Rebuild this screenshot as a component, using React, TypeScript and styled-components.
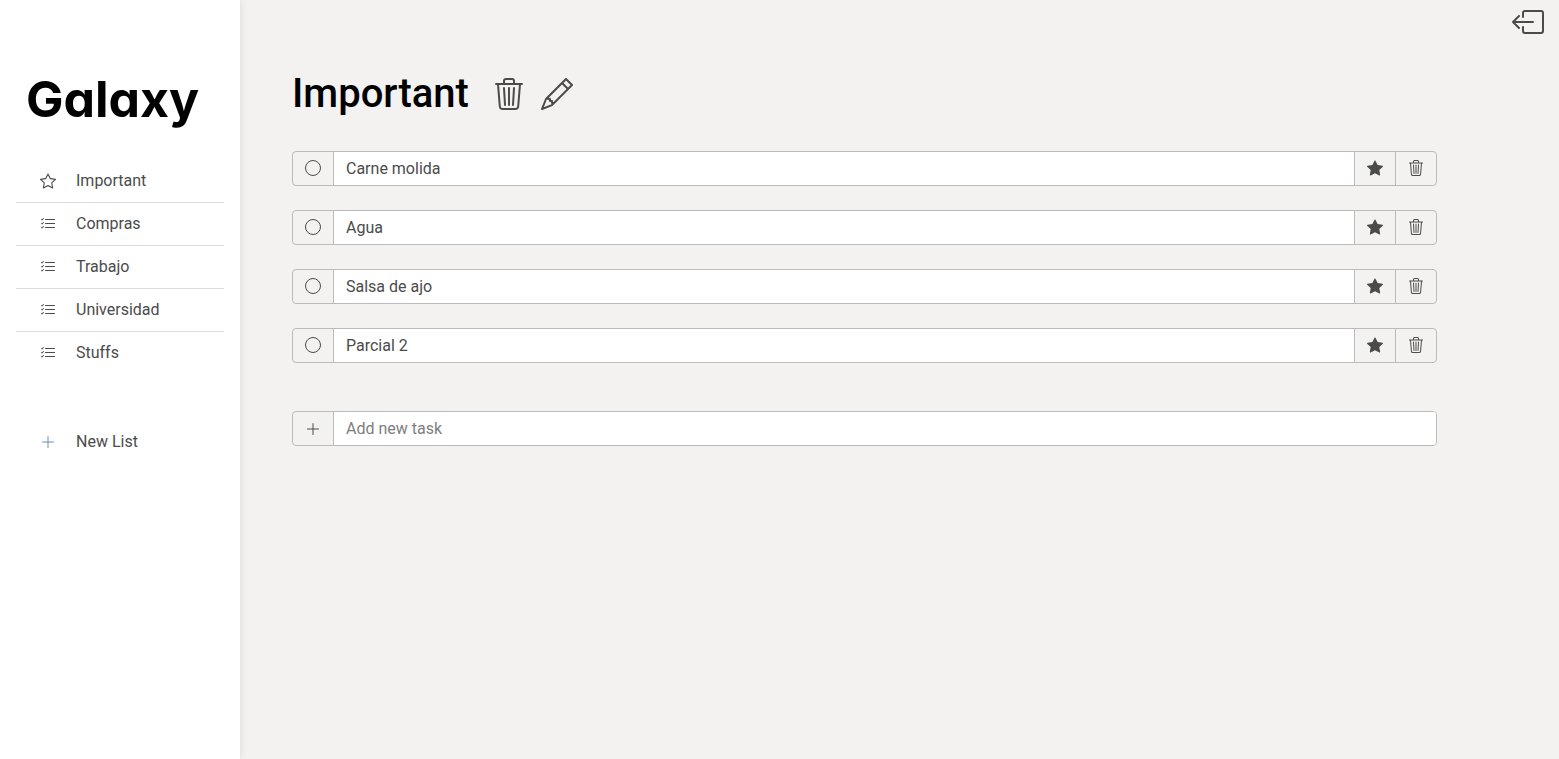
import React, { useState } from "react";
import styled, { createGlobalStyle } from "styled-components";
import {
  BsBoxArrowLeft,
  BsListCheck,
  BsPencil,
  BsPlusLg,
  BsStar,
  BsStarFill,
  BsTrash3,
} from "react-icons/bs";

const ink = "#4b4b4b";
const line = "#bbbbbb";
const surface = "#f3f2f1";

const GlobalStyle = createGlobalStyle`
  *, *::before, *::after { box-sizing: border-box; }
  body {
    margin: 0;
    background: ${surface};
    color: ${ink};
    font-family: Roboto, "Liberation Sans", sans-serif;
    font-size: 16px;
    line-height: 24px;
  }
  svg { display: block; }
`;

const Page = styled.div`
  display: flex;
  min-height: 100vh;
`;

const Sidebar = styled.aside`
  flex: none;
  width: 240px;
  padding: 64px 16px 32px;
  background: #fff;
  box-shadow: 0 0 8px rgba(0, 0, 0, 0.1);
`;

const Logo = styled.a`
  display: block;
  margin-bottom: 26px;
  padding-left: 10px;
  color: #000;
  font-family: Inter, Lato, sans-serif;
  font-size: 50px;
  font-weight: 700;
  font-feature-settings: "cv11";
  line-height: 70px;
  text-decoration: none;
`;

const Lists = styled.ul`
  margin: 0 0 48px;
  padding: 0;
  list-style: none;
`;

const ListItem = styled.li`
  & + & {
    border-top: 1px solid #dddddd;
  }
`;

const NavLink = styled.a`
  display: flex;
  align-items: center;
  gap: 20px;
  height: 42px;
  padding: 0 24px;
  color: ${ink};
  text-decoration: none;
`;

const NewListButton = styled.button`
  display: flex;
  align-items: center;
  gap: 20px;
  width: 100%;
  height: 40px;
  padding: 0 24px;
  border: 0;
  background: none;
  color: ${ink};
  font: inherit;
  cursor: pointer;

  svg {
    color: #6f8fa8;
  }
`;

const Main = styled.main`
  position: relative;
  flex: 1;
  min-width: 0;
  padding: 64px 122px 64px 52px;
`;

const IconButton = styled.button`
  padding: 0;
  border: 0;
  background: none;
  color: ${ink};
  cursor: pointer;
`;

const SignOut = styled(IconButton)`
  position: absolute;
  top: 6px;
  right: 15px;
`;

const Header = styled.header`
  display: flex;
  align-items: center;
  gap: 16px;
  margin-bottom: 27px;
`;

const Title = styled.h1`
  margin: 0 8px 0 0;
  color: #000;
  font-size: 40px;
  font-weight: 500;
  line-height: 60px;
`;

const Tasks = styled.ul`
  display: grid;
  gap: 24px;
  margin: 0 0 48px;
  padding: 0;
  list-style: none;
`;

const Row = styled.div`
  display: flex;
  height: 35px;
  overflow: hidden;
  border: 1px solid ${line};
  border-radius: 4px;
`;

const Field = styled.input`
  flex: 1;
  min-width: 0;
  padding: 0 12px;
  border: 0;
  border-left: 1px solid ${line};
  background: #fff;
  color: ${ink};
  font: inherit;
  outline: none;

  &::placeholder {
    color: #7e7e7e;
    opacity: 1;
  }
`;

const CheckCell = styled.label`
  display: flex;
  align-items: center;
  justify-content: center;
  width: 40px;
  padding-bottom: 1px;
`;

const Check = styled.input`
  appearance: none;
  width: 16px;
  height: 16px;
  margin: 0;
  border: 1px solid ${ink};
  border-radius: 50%;

  &:checked {
    background: ${ink};
  }
`;

const CellButton = styled(IconButton)<{ $divided?: boolean }>`
  display: flex;
  align-items: center;
  justify-content: center;
  width: ${(p) => (p.$divided ? 41 : 40)}px;
  padding-bottom: ${(p) => (p.$divided ? 1 : 0)}px;
  border-left: ${(p) => (p.$divided ? `1px solid ${line}` : "0")};
`;

const lists = ["Important", "Compras", "Trabajo", "Universidad", "Stuffs"];
const tasks = ["Carne molida", "Agua", "Salsa de ajo", "Parcial 2"];

function TaskRow({ name }: { name: string }) {
  const [text, setText] = useState(name);
  return (
    <Row>
      <CheckCell>
        <Check type="checkbox" aria-label={`Complete ${name}`} />
      </CheckCell>
      <Field
        type="text"
        aria-label={`Task ${name}`}
        value={text}
        onChange={(e) => setText(e.target.value)}
      />
      <CellButton $divided type="button" aria-label={`Unmark ${name}`}>
        <BsStarFill size={16} />
      </CellButton>
      <CellButton $divided type="button" aria-label={`Delete ${name}`}>
        <BsTrash3 size={16} />
      </CellButton>
    </Row>
  );
}

export default function App() {
  return (
    <>
      <GlobalStyle />
      <Page>
        <Sidebar>
          <Logo href="#home">Galaxy</Logo>
          <nav>
            <Lists>
              {lists.map((name, i) => (
                <ListItem key={name}>
                  <NavLink href={`#${name}`}>
                    {i === 0 ? <BsStar size={16} /> : <BsListCheck size={16} />}
                    {name}
                  </NavLink>
                </ListItem>
              ))}
            </Lists>
          </nav>
          <NewListButton type="button">
            <BsPlusLg size={16} />
            New List
          </NewListButton>
        </Sidebar>
        <Main>
          <SignOut type="button" aria-label="Sign out">
            <BsBoxArrowLeft size={32} />
          </SignOut>
          <Header>
            <Title>Important</Title>
            <IconButton type="button" aria-label="Delete list">
              <BsTrash3 size={32} />
            </IconButton>
            <IconButton type="button" aria-label="Rename list">
              <BsPencil size={32} />
            </IconButton>
          </Header>
          <Tasks>
            {tasks.map((name) => (
              <li key={name}>
                <TaskRow name={name} />
              </li>
            ))}
          </Tasks>
          <Row>
            <CellButton type="button" aria-label="Add task">
              <BsPlusLg size={16} />
            </CellButton>
            <Field type="text" aria-label="New task" placeholder="Add new task" />
          </Row>
        </Main>
      </Page>
    </>
  );
}
